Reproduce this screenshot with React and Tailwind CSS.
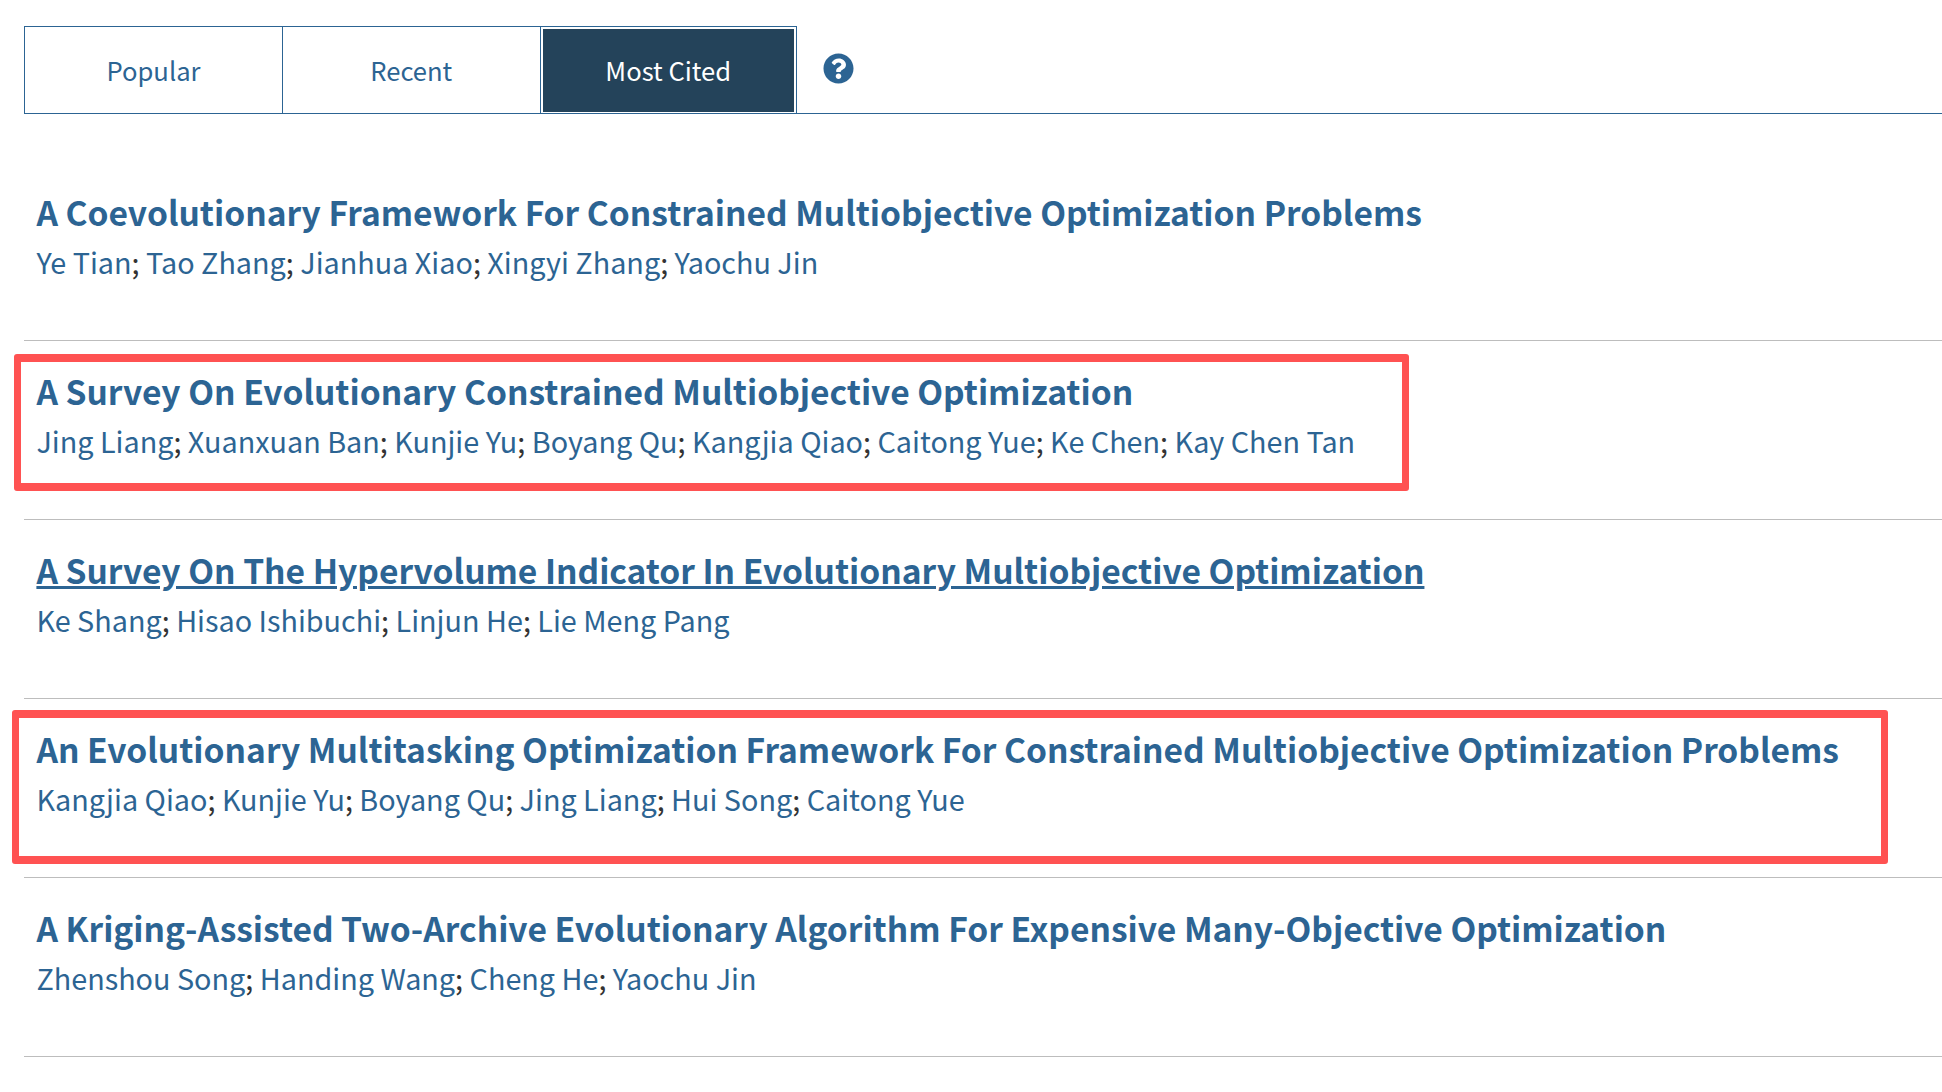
import { FaQuestionCircle } from 'react-icons/fa';

const articles = [
  {
    title: 'A Coevolutionary Framework For Constrained Multiobjective Optimization Problems',
    authors: ['Ye Tian', 'Tao Zhang', 'Jianhua Xiao', 'Xingyi Zhang', 'Yaochu Jin'],
  },
  {
    title: 'A Survey On Evolutionary Constrained Multiobjective Optimization',
    authors: ['Jing Liang', 'Xuanxuan Ban', 'Kunjie Yu', 'Boyang Qu', 'Kangjia Qiao', 'Caitong Yue', 'Ke Chen', 'Kay Chen Tan'],
  },
  {
    title: 'A Survey On The Hypervolume Indicator In Evolutionary Multiobjective Optimization',
    authors: ['Ke Shang', 'Hisao Ishibuchi', 'Linjun He', 'Lie Meng Pang'],
    hovered: true,
  },
  {
    title: 'An Evolutionary Multitasking Optimization Framework For Constrained Multiobjective Optimization Problems',
    authors: ['Kangjia Qiao', 'Kunjie Yu', 'Boyang Qu', 'Jing Liang', 'Hui Song', 'Caitong Yue'],
  },
  {
    title: 'A Kriging-Assisted Two-Archive Evolutionary Algorithm For Expensive Many-Objective Optimization',
    authors: ['Zhenshou Song', 'Handing Wang', 'Cheng He', 'Yaochu Jin'],
  },
];

function App() {
  return (
    <div className="relative h-[1092px] overflow-hidden bg-white pl-6 pt-[26px] font-['Noto_Sans_CJK_SC',sans-serif] text-[#2c6493]">
      <div className="flex h-[88px] border-b border-[#2c6493]">
        <button className="w-[258px] border border-r-0 border-b-0 border-[#2c6493] text-[25.6px]">Popular</button>
        <button className="w-[257.5px] border border-r-0 border-b-0 border-[#2c6493] text-[25.6px]">Recent</button>
        <div className="w-[257.5px] border border-b-0 border-[#2c6493] pt-[2px] px-[2px]">
          <div className="flex h-[83px] items-center justify-center bg-[#24435a] text-[25.6px] text-white">Most Cited</div>
        </div>
        <div className="pl-[26px] pt-[27px]">
          <FaQuestionCircle className="h-[31px] w-[31px]" />
        </div>
      </div>

      <div className="mt-[48px]">
        {articles.map((article) => (
          <div key={article.title} className="h-[179px] border-b border-[#bdbdbd] pl-[12.4px] pt-[27px]">
            <h3 className={`text-[33.55px] font-semibold leading-[46px] ${article.hovered ? 'underline' : ''}`}>
              {article.title}
            </h3>
            <p className="mt-[4px] text-[28.78px] leading-[46px]">
              {article.authors.map((name, i) => (
                <span key={name}>
                  {name}
                  {i < article.authors.length - 1 && <span className="text-[#333]">; </span>}
                </span>
              ))}
            </p>
          </div>
        ))}
      </div>

      {/* red annotation boxes drawn over the list */}
      <div className="absolute left-[14px] top-[354px] h-[137px] w-[1395px] rounded-[3px] border-x-[7px] border-y-[8px] border-[#ff5252]"></div>
      <div className="absolute left-[12px] top-[710px] h-[154px] w-[1876px] rounded-[3px] border-x-[7px] border-y-[8px] border-[#ff5252]"></div>
    </div>
  );
}

export default App;
